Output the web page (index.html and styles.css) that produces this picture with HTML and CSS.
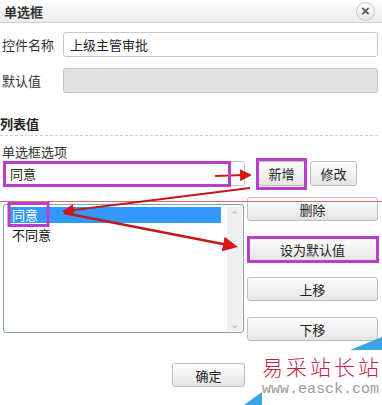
FILE: index.html
```html
<!DOCTYPE html>
<html lang="zh-CN">
<head>
    <meta charset="UTF-8">
    <title>单选框</title>
    <link rel="stylesheet" href="styles.css">
</head>
<body>

<div class="dialog">
    <div class="header">
        <span class="title">单选框</span>
        <span class="close">&times;</span>
    </div>

    <div class="form">
        <div class="row">
            <label class="label">控件名称</label>
            <input class="field" type="text" value="上级主管审批">
        </div>
        <div class="row row-second">
            <label class="label">默认值</label>
            <input class="field field-disabled" type="text" disabled>
        </div>
    </div>

    <div class="section">
        <div class="section-title">列表值</div>
        <div class="sub-label">单选框选项</div>
        <div class="option-row">
            <input class="field option-field" type="text" value="同意">
            <button class="btn btn-small btn-add">新增</button>
            <button class="btn btn-small">修改</button>
        </div>

        <div class="list-area">
            <div class="listbox">
                <div class="items">
                    <div class="item selected">同意</div>
                    <div class="item">不同意</div>
                </div>
                <div class="scrollbar">
                    <span class="chev">&#8963;</span>
                    <span class="chev chev-down">&#8964;</span>
                </div>
            </div>
            <div class="side-buttons">
                <button class="btn btn-wide">删除</button>
                <button class="btn btn-wide">设为默认值</button>
                <button class="btn btn-wide">上移</button>
                <button class="btn btn-wide">下移</button>
            </div>
        </div>

        <div class="footer">
            <button class="btn btn-ok">确定</button>
        </div>
    </div>
</div>

<!-- annotations drawn over the screenshot -->
<svg class="marks" width="382" height="405" viewBox="0 0 382 405">
    <defs>
        <marker id="head" markerWidth="6" markerHeight="6" refX="4" refY="3" orient="auto" markerUnits="strokeWidth">
            <path d="M0,0 L6,3 L0,6 Z" fill="#d21818"/>
        </marker>
    </defs>
    <line x1="0" y1="201.5" x2="382" y2="201.5" stroke="#e06a6a" stroke-width="1"/>
    <line x1="215" y1="176" x2="248" y2="175" stroke="#d21818" stroke-width="2" marker-end="url(#head)"/>
    <line x1="250" y1="188" x2="66" y2="211" stroke="#c41818" stroke-width="2" marker-end="url(#head)"/>
    <line x1="64" y1="213" x2="233" y2="246" stroke="#c41818" stroke-width="2.5" marker-end="url(#head)"/>
    <rect x="4.5" y="162.5" width="225" height="23" fill="none" stroke="#b93fcb" stroke-width="3"/>
    <rect x="257.5" y="159.5" width="48" height="29" fill="none" stroke="#b93fcb" stroke-width="3"/>
    <rect x="9" y="203.5" width="39" height="22" fill="none" stroke="#b93fcb" stroke-width="3"/>
    <rect x="248.5" y="237.5" width="129" height="24" fill="none" stroke="#b93fcb" stroke-width="3"/>
    <polygon points="350,350 382,337 382,350" fill="#3aa3e3"/>
    <polygon points="244,405 262,392 262,405" fill="#3aa3e3"/>
</svg>

<div class="watermark">
    <div class="wm-name">易采站长站</div>
    <div class="wm-url">www.easck.com</div>
</div>

</body>
</html>
```

FILE: styles.css
```css
body {
    margin: 0;
    background-color: #fff;
    font-family: 'Noto Sans CJK SC', 'Liberation Sans', sans-serif;
    font-size: 13px;
    color: #222;
}
.dialog {
    width: 382px;
    height: 405px;
    overflow: hidden;
}
.header {
    height: 22px;
    display: flex;
    align-items: center;
    justify-content: space-between;
    padding: 0 7px 0 4px;
    background: linear-gradient(#ffffff, #ececec);
    border-bottom: 1px solid #cfcfcf;
}
.title {
    font-weight: bold;
    font-size: 13px;
    color: #333;
}
.close {
    width: 17px;
    height: 17px;
    line-height: 16px;
    text-align: center;
    border: 1px solid #c8c8c8;
    border-radius: 50%;
    background: linear-gradient(#ffffff, #e6e6e6);
    font-family: 'Liberation Sans', sans-serif;
    font-weight: bold;
    font-size: 15px;
    color: #555;
}
.form {
    padding: 0 4px 0 2px;
}
.row {
    display: flex;
    align-items: center;
    margin-top: 9px;
}
.row-second {
    margin-top: 11px;
}
.label {
    width: 61px;
    color: #333;
}
.field {
    box-sizing: border-box;
    height: 25px;
    padding: 0 6px;
    border: 1px solid #c9c9c9;
    border-radius: 3px;
    background-color: #fff;
    font-family: inherit;
    font-size: 13px;
    color: #222;
}
.row .field {
    flex: 1;
}
.field-disabled {
    background-color: #e2e2e2;
    border-color: #c4c4c4;
}
.section {
    padding: 0 4px 0 3px;
}
.section-title {
    margin: 22px 0 0 -3px;
    padding-bottom: 2px;
    line-height: 18px;
    font-weight: bold;
    border-bottom: 1px dashed #cccccc;
}
.sub-label {
    margin: 8px 0 0 -1px;
    line-height: 16px;
    color: #333;
}
.option-row {
    display: flex;
    align-items: center;
    margin-top: 1px;
}
.option-field {
    width: 242px;
}
.btn {
    box-sizing: border-box;
    border: 1px solid #bdbdbd;
    border-radius: 3px;
    background: linear-gradient(#ffffff, #e4e4e4);
    font-family: inherit;
    font-size: 13px;
    color: #222;
    padding: 0;
    cursor: pointer;
}
.btn-small {
    width: 47px;
    height: 25px;
}
.btn-add {
    margin-left: 13px;
    margin-right: 5px;
}
.list-area {
    display: flex;
    align-items: flex-start;
    margin-top: 11px;
}
.listbox {
    box-sizing: border-box;
    width: 241px;
    height: 129px;
    margin-top: 7px;
    border: 1px solid #7fa4b4;
    border-radius: 3px;
    display: flex;
    padding: 2px 1px 1px 6px;
}
.items {
    flex: 1;
}
.item {
    height: 16px;
    line-height: 16px;
    padding-left: 2px;
    color: #111;
}
.item + .item {
    margin-top: 4px;
}
.selected {
    background-color: #3399ff;
    color: #fff;
    margin-right: 6px;
}
.scrollbar {
    width: 15px;
    background-color: #efefef;
    display: flex;
    flex-direction: column;
    justify-content: space-between;
    align-items: center;
    color: #b8b8b8;
    font-size: 11px;
    line-height: 14px;
}
.chev-down {
    margin-bottom: 1px;
}
.side-buttons {
    display: flex;
    flex-direction: column;
    gap: 16px;
    margin-left: 3px;
}
.btn-wide {
    width: 131px;
    height: 24px;
}
.footer {
    margin-top: 22px;
    padding-left: 169px;
}
.btn-ok {
    width: 73px;
    height: 24px;
}
.marks {
    position: absolute;
    left: 0;
    top: 0;
    pointer-events: none;
}
.watermark {
    position: absolute;
    left: 262px;
    top: 352px;
    width: 120px;
    background-color: rgba(255, 255, 255, 0.85);
}
.wm-name {
    font-size: 21px;
    line-height: 28px;
    letter-spacing: 3px;
    color: #c3203b;
    font-weight: 300;
}
.wm-url {
    font-family: 'Liberation Mono', monospace;
    font-size: 15px;
    line-height: 20px;
    color: #9b9b9b;
}
```
